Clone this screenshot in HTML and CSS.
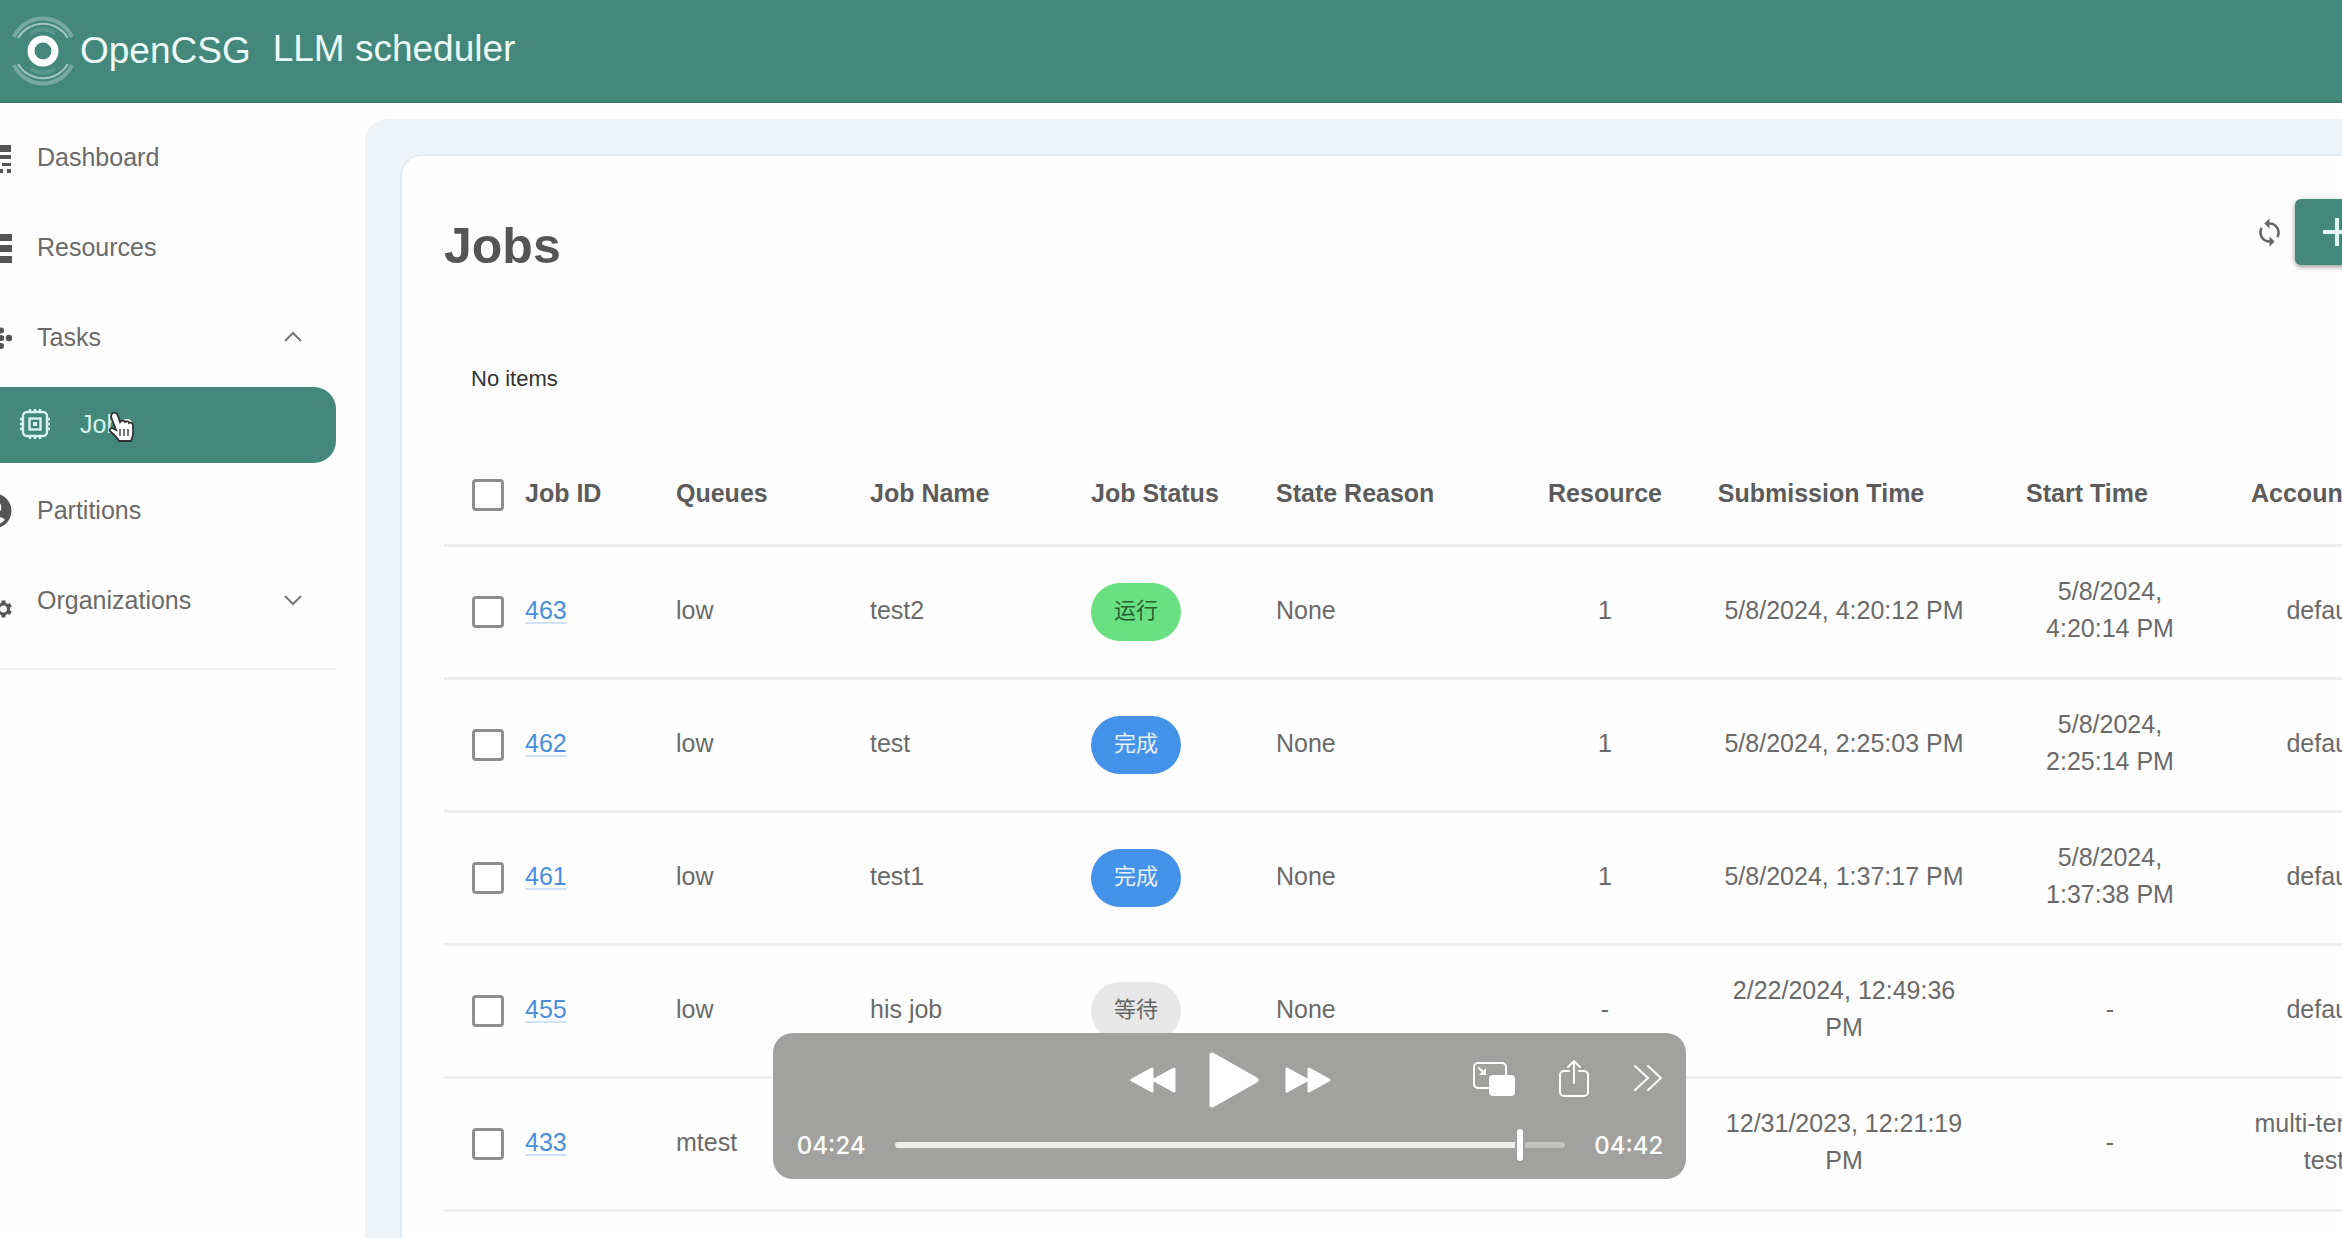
FILE: index.html
```html
<!DOCTYPE html>
<html lang="en">
<head>
<meta charset="utf-8">
<title>OpenCSG LLM scheduler</title>
<link rel="stylesheet" href="styles.css">
</head>
<body>
<header class="topbar">
  <svg class="logo" viewBox="0 0 64 72" aria-hidden="true">
    <g fill="none" stroke="#fff">
      <circle cx="32" cy="36" r="12" stroke-width="7"/>
      <path d="M3 22A32 32 0 0 1 61 22M3 50A32 32 0 0 0 61 50" stroke-width="4" stroke-opacity=".28"/>
      <path d="M7 23A29 29 0 0 1 57 23M7 49A29 29 0 0 0 57 49" stroke-width="2" stroke-opacity=".5"/>
      <path d="M20 18A22 22 0 0 1 44 18M20 54A22 22 0 0 0 44 54" stroke-width="4" stroke-opacity=".12"/>
    </g>
  </svg>
  <span class="brand">OpenCSG</span>
  <span class="product">LLM scheduler</span>
</header>

<div class="layout">
  <nav class="sidebar">
    <a class="nav-item" href="#dashboard">
      <svg class="nav-icon" viewBox="0 0 36 36" aria-hidden="true"><path d="M4 6h31v7H4zM4 16h31v4H4zM4 24h9v3H4zM15 24h8v3h-8zM26 24h9v3h-9zM15 30h3v4h-3zM23 30h4v4h-4zM31 30h4v4h-4z"/></svg>
      <span>Dashboard</span>
    </a>
    <a class="nav-item" href="#resources">
      <svg class="nav-icon" viewBox="0 0 36 36" aria-hidden="true"><path d="M2 5h34v7H2zM2 16h34v7H2zM2 27h34v7H2z"/></svg>
      <span>Resources</span>
    </a>
    <a class="nav-item" href="#tasks">
      <svg class="nav-icon" viewBox="0 0 36 36" aria-hidden="true"><circle cx="33" cy="19" r="3.300"/><circle cx="25" cy="11.500" r="3"/><circle cx="25" cy="19" r="3"/><circle cx="25" cy="27" r="3"/><path d="M8 17h20v4H8z"/></svg>
      <span>Tasks</span>
      <svg class="chevron" viewBox="0 0 20 12" aria-hidden="true"><path d="M2 10l8-8 8 8"/></svg>
    </a>
    <a class="nav-item nav-sub" href="#jobs" aria-current="page">
      <svg class="cpu" viewBox="0 0 32 32" aria-hidden="true"><g fill="none" stroke="currentColor" stroke-width="2.400"><rect x="4" y="4" width="24" height="24" rx="4"/><rect x="10.500" y="10.500" width="11" height="11"/><path d="M11 1v3M16 1v3M21 1v3M11 28v3M16 28v3M21 28v3M1 11h3M1 16h3M1 21h3M28 11h3M28 16h3M28 21h3"/></g><rect x="14" y="14" width="4" height="4" fill="currentColor"/></svg>
      <span>Jobs</span>
      <svg class="pointer" viewBox="0 0 26 32" aria-hidden="true"><path d="M5 2c2-1 4 0 5 3l2 6c1-2 4-2 5 0 1-1 4-1 4 1 2-1 4 0 4 3v7c0 4-1 5-2 8H11c-2-4-6-7-9-10-1-2 1-4 4-2l2 1L3 6C3 4 3 3 5 2z" fill="#fff" stroke="#333" stroke-width="1.800"/><path d="M12 18v7M16 18v7M20 18v7" stroke="#777" stroke-width="2"/></svg>
    </a>
    <a class="nav-item" href="#partitions">
      <svg class="nav-icon" viewBox="1.700 1.200 20.600 20.600" aria-hidden="true"><path fill-rule="evenodd" d="M12 2a10 10 0 1 0 0 20 10 10 0 0 0 0-20zm0 3.800a4.200 4.200 0 1 1 0 8.400 4.200 4.200 0 0 1 0-8.400zm0 14.200c-2.500 0-4.700-1.100-6.200-2.900.5-1.300 3.800-2 6.200-2s5.700.7 6.200 2c-1.500 1.800-3.700 2.900-6.200 2.900z"/></svg>
      <span>Partitions</span>
    </a>
    <a class="nav-item" href="#organizations">
      <svg class="nav-icon" viewBox="0 0 36 36" aria-hidden="true"><g fill="none" stroke="#555"><circle cx="27.500" cy="27" r="5" stroke-width="3"/><path d="M27.500 18.500v3M27.500 32.500v3M20.200 22.800l2.500 1.400M32.300 29.800l2.500 1.400M20.200 31.200l2.500-1.400M32.300 24.200l2.500-1.400" stroke-width="4"/></g><circle cx="13" cy="12" r="7"/><path d="M1 33c0-8 5-12 14-12v12z"/></svg>
      <span>Organizations</span>
      <svg class="chevron" viewBox="0 0 20 12" aria-hidden="true"><path d="M2 2l8 8 8-8"/></svg>
    </a>
    <hr class="nav-rule">
  </nav>

  <main class="panel">
    <section class="card">
      <div class="toolbar">
        <h1>Jobs</h1>
        <div class="actions">
          <button class="refresh" type="button" aria-label="Refresh"><svg viewBox="0 0 24 24" aria-hidden="true"><path d="M12 4V1L8 5l4 4V6c3.310 0 6 2.690 6 6 0 1.010-.25 1.970-.7 2.800l1.460 1.460C19.540 15.030 20 13.570 20 12c0-4.420-3.580-8-8-8zm0 14c-3.310 0-6-2.690-6-6 0-1.010.25-1.970.7-2.800L5.240 7.740C4.460 8.970 4 10.430 4 12c0 4.420 3.580 8 8 8v3l4-4-4-4v3z"/></svg></button>
          <button class="add" type="button" aria-label="Add job"><svg viewBox="0 0 30 30" aria-hidden="true"><path d="M15 1v28M1 15h28"/></svg></button>
        </div>
      </div>
      <p class="summary">No items</p>
      <table class="jobs">
        <colgroup><col class="c-check"><col class="c-id"><col class="c-queue"><col class="c-name"><col class="c-status"><col class="c-reason"><col class="c-resource"><col class="c-submitted"><col class="c-started"><col></colgroup>
        <thead>
          <tr><th class="check"><input type="checkbox" aria-label="Select all jobs"></th><th>Job ID</th><th>Queues</th><th>Job Name</th><th>Job Status</th><th>State Reason</th><th class="mid">Resource</th><th class="mid sortable">Submission Time</th><th class="mid sortable">Start Time</th><th class="mid sortable">Account</th></tr>
        </thead>
        <tbody>
          <tr><td class="check"><input type="checkbox" aria-label="Select job 463"></td><td><a href="#463">463</a></td><td>low</td><td>test2</td><td class="status"><span class="chip running">运行</span></td><td>None</td><td class="mid">1</td><td class="mid">5/8/2024, 4:20:12 PM</td><td class="mid">5/8/2024, 4:20:14 PM</td><td class="mid">default</td></tr>
          <tr><td class="check"><input type="checkbox" aria-label="Select job 462"></td><td><a href="#462">462</a></td><td>low</td><td>test</td><td class="status"><span class="chip done">完成</span></td><td>None</td><td class="mid">1</td><td class="mid">5/8/2024, 2:25:03 PM</td><td class="mid">5/8/2024, 2:25:14 PM</td><td class="mid">default</td></tr>
          <tr><td class="check"><input type="checkbox" aria-label="Select job 461"></td><td><a href="#461">461</a></td><td>low</td><td>test1</td><td class="status"><span class="chip done">完成</span></td><td>None</td><td class="mid">1</td><td class="mid">5/8/2024, 1:37:17 PM</td><td class="mid">5/8/2024, 1:37:38 PM</td><td class="mid">default</td></tr>
          <tr><td class="check"><input type="checkbox" aria-label="Select job 455"></td><td><a href="#455">455</a></td><td>low</td><td>his job</td><td class="status"><span class="chip waiting">等待</span></td><td>None</td><td class="mid">-</td><td class="mid">2/22/2024, 12:49:36 PM</td><td class="mid">-</td><td class="mid">default</td></tr>
          <tr><td class="check"><input type="checkbox" aria-label="Select job 433"></td><td><a href="#433">433</a></td><td>mtest</td><td></td><td></td><td></td><td></td><td class="mid">12/31/2023, 12:21:19 PM</td><td class="mid">-</td><td class="mid">multi-tenant-test</td></tr>
        </tbody>
      </table>
    </section>
  </main>
</div>

<div class="player" role="group" aria-label="Video controls">
  <div class="controls">
    <div class="transport">
      <button type="button" aria-label="Rewind"><svg width="46" height="28" viewBox="0 0 46 28" aria-hidden="true"><path class="solid" d="M22 3v22L2 14zM44 3v22L24 14z"/></svg></button>
      <button type="button" aria-label="Play"><svg width="50" height="56" viewBox="0 0 50 56" aria-hidden="true"><path class="solid big" d="M3 3v50l44-25z"/></svg></button>
      <button type="button" aria-label="Fast forward"><svg width="46" height="28" viewBox="0 0 46 28" aria-hidden="true"><path class="solid" d="M2 3v22l20-11zM24 3v22l20-11z"/></svg></button>
    </div>
    <div class="extras">
      <button type="button" aria-label="Picture in picture"><svg width="42" height="38" viewBox="0 0 42 38" aria-hidden="true"><path class="line" d="M15 27H5a4 4 0 0 1-4-4V6a4 4 0 0 1 4-4h24a4 4 0 0 1 4 4v8M6 7l6 6"/><path d="M13 7v7H6z" fill="#fff"/><rect x="16" y="14" width="26" height="21" rx="4" fill="#fff"/></svg></button>
      <button type="button" aria-label="Share"><svg width="30" height="38" viewBox="0 0 30 38" aria-hidden="true"><path class="line" d="M10 10H5a4 4 0 0 0-4 4v17a4 4 0 0 0 4 4h20a4 4 0 0 0 4-4V14a4 4 0 0 0-4-4h-5M15 22V0M9 6l6-6 6 6"/></svg></button>
      <button type="button" aria-label="More"><svg width="30" height="38" viewBox="0 0 30 38" aria-hidden="true"><path class="line" d="M2 5l13 12L2 29M15 5l13 12-13 12"/></svg></button>
    </div>
  </div>
  <div class="timeline">
    <span>04:24</span>
    <input type="range" min="0" max="282" value="264" aria-label="Playback position">
    <span>04:42</span>
  </div>
</div>
</body>
</html>
```
FILE: styles.css
```css
* { box-sizing: border-box; }

html, body { height: 100%; }

body {
  margin: 0;
  overflow: hidden;
  display: flex;
  flex-direction: column;
  background: #fefefe;
  color: #6a6a6a;
  font: 25px "Liberation Sans", "Noto Sans CJK SC", sans-serif;
}

a { color: inherit; text-decoration: none; }

button { padding: 0; border: 0; background: none; display: flex; align-items: center; justify-content: center; }

/* top bar */
.topbar {
  flex: none;
  height: 103px;
  padding: 0 11px 4px;
  display: flex;
  align-items: center;
  background: #43887b;
  border-bottom: 2px solid #3b7a6e;
  color: #ecfbf8;
  font-size: 37px;
}
.logo { width: 64px; height: 72px; margin-top: 4px; overflow: visible; }
.brand { margin: 4px 22px 0 5px; }

/* layout */
.layout { flex: 1; min-height: 0; display: flex; }

.sidebar { flex: none; width: 365px; padding: 9px 29px 0 0; }
.nav-item { display: flex; align-items: center; height: 90px; padding-right: 33px; }
.nav-icon { width: 36px; height: 36px; margin: 0 25px 0 -24px; fill: #555; }
.chevron { width: 20px; height: 12px; margin-left: auto; fill: none; stroke: #777; stroke-width: 2; }
.nav-sub {
  position: relative;
  height: 76px;
  margin: 5px 0 2px;
  padding: 0 0 2px 19px;
  border-radius: 0 22px 22px 0;
  background: #43887b;
  color: #d5f3ec;
}
.cpu { width: 32px; height: 32px; margin-right: 29px; }
.pointer { position: absolute; left: 108px; top: 24px; width: 26px; height: 32px; }
.nav-rule { margin: 23px 0 0; border: 0; border-top: 2px solid #eee; }

.panel {
  flex: 1;
  min-width: 0;
  margin-top: 16px;
  padding: 35px 0 0 35px;
  border-radius: 22px 0 0 0;
  background: #edf3f7;
}
.card {
  height: 100%;
  margin-right: -123px;
  padding: 43px 42px 0;
  border: solid #e1ebf6;
  border-width: 2px 0 0 2px;
  border-radius: 22px 0 0 0;
  background: #fefefe;
}

.toolbar { display: flex; justify-content: space-between; padding-right: 44px; }
h1 { margin: 18px 0 0; font-size: 50px; line-height: 58px; color: #555; }
.actions { display: flex; gap: 10px; height: 66px; }
.refresh svg { width: 31px; height: 31px; fill: #666; }
.add { width: 84px; border-radius: 6px; background: #43887b; box-shadow: 0 2px 5px rgba(0, 0, 0, .4); }
.add svg { width: 30px; height: 30px; fill: none; stroke: #e2faf5; stroke-width: 4; }
.summary { margin: 91px 0 54px 27px; font-size: 22px; line-height: 26px; color: #333; }

/* table */
.jobs { width: 100%; table-layout: fixed; border-collapse: separate; border-spacing: 0; line-height: 37px; }
.c-check { width: 59px; }
.c-id { width: 151px; }
.c-queue { width: 194px; }
.c-name { width: 221px; }
.c-status { width: 185px; }
.c-reason { width: 263px; }
.c-resource { width: 176px; }
.c-submitted { width: 302px; }
.c-started { width: 230px; }
th, td { height: 133px; padding: 0 22px 4px; border-bottom: 3px solid #eee; text-align: left; vertical-align: middle; }
th { height: 101px; color: #5c5c5c; white-space: nowrap; }
.mid { text-align: center; }
.sortable { padding-right: 68px; }
.check { padding: 0 0 0 28px; }
.status { padding-bottom: 0; }
.jobs a { color: #4a8fdb; text-decoration: underline 2px #cfe2f6; text-underline-offset: 3px; }
input[type="checkbox"] {
  appearance: none;
  display: block;
  width: 32px;
  height: 32px;
  margin: 0;
  border: 3px solid #8f8f8f;
  border-radius: 4px;
  background: #fff;
}
.chip {
  display: flex;
  align-items: center;
  justify-content: center;
  width: 90px;
  height: 58px;
  padding-bottom: 4px;
  border-radius: 29px;
  font-size: 22px;
}
.running { background: #69e182; color: #28632f; }
.done { background: #4592ea; color: #e6f3ff; }
.waiting { background: #e7e7e7; color: #666; }

/* video controls float over the page */
.player {
  position: fixed;
  left: 33%;
  bottom: 59px;
  width: 39%;
  height: 146px;
  padding: 19px 23px 0 24px;
  border-radius: 20px;
  background: #a1a1a0;
  color: #fff;
  font: 500 24px Inter, sans-serif;
}
.controls { display: grid; grid-template-columns: 1fr auto 1fr; align-items: center; }
.transport { grid-column: 2; display: flex; align-items: center; gap: 30px; }
.transport button:nth-child(2) { margin-left: 3px; }
.transport button:last-child { margin-left: -4px; }
.extras { grid-column: 3; justify-self: end; display: flex; gap: 44px; }
.extras svg { overflow: visible; }
.solid { fill: #fff; stroke: #fff; stroke-width: 3; stroke-linejoin: round; }
.big { stroke-width: 5; }
.line { fill: none; stroke: #fff; stroke-width: 2; stroke-linecap: round; stroke-linejoin: round; }
.timeline { display: flex; align-items: center; gap: 29px; height: 32px; margin-top: 21px; }
input[type="range"] { appearance: none; flex: 1; min-width: 0; height: 32px; margin: 0; background: none; }
input[type="range"]::-webkit-slider-runnable-track {
  height: 6px;
  border-radius: 3px;
  background: linear-gradient(to right, #ededeb 93%, #c2c2c1 93%);
}
input[type="range"]::-webkit-slider-thumb {
  appearance: none;
  width: 6px;
  height: 32px;
  margin-top: -13px;
  border-radius: 3px;
  background: #fff;
  box-shadow: 0 0 0 2px #a1a1a0;
}
```
